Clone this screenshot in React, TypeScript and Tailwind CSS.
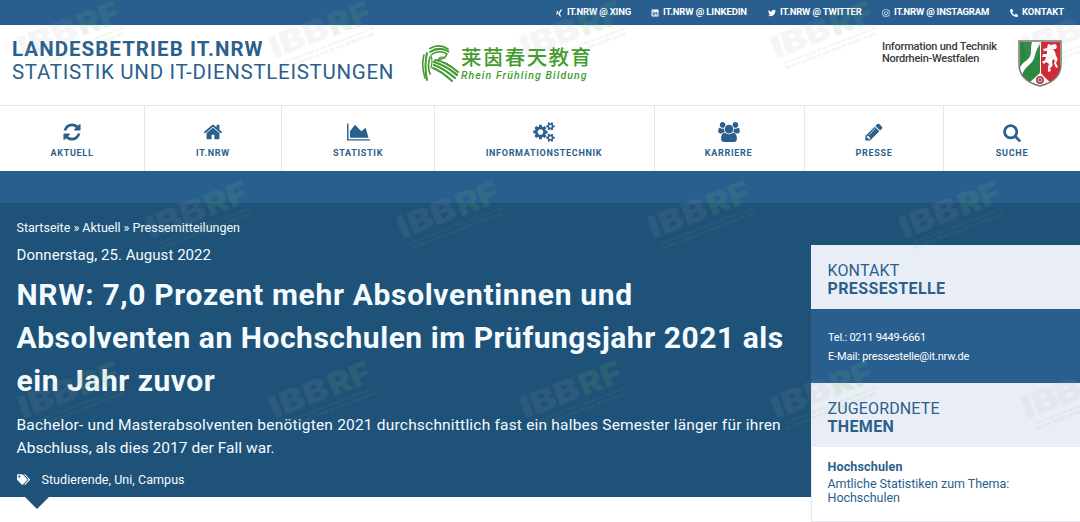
import React from 'react';
import { FaXing, FaLinkedin, FaTwitter, FaInstagram, FaPhoneAlt, FaTags } from 'react-icons/fa';

interface GlyphProps {
  d: string;
  w?: number;
  className?: string;
}

function Glyph({ d, w = 1792, className }: GlyphProps) {
  return (
    <svg viewBox={`0 0 ${w} 1792`} className={className} fill="currentColor">
      <path d={d} />
    </svg>
  );
}

const REFRESH = 'M1639 1056q0 5-1 7-64 268-268 434.500t-478 166.500q-146 0-282.500-55t-243.500-157l-129 129q-19 19-45 19t-45-19-19-45v-448q0-26 19-45t45-19h448q26 0 45 19t19 45-19 45l-137 137q71 66 161 102t187 36q134 0 250-65t186-179q11-17 53-117 8-23 30-23h192q13 0 22.500 9.500t9.500 22.500zm25-800v448q0 26-19 45t-45 19h-448q-26 0-45-19t-19-45 19-45l138-138q-148-137-349-137-134 0-250 65t-186 179q-11 17-53 117-8 23-30 23h-199q-13 0-22.500-9.500t-9.500-22.500v-7q65-268 270-434.500t480-166.500q146 0 284 55.500t245 156.500l130-129q19-19 45-19t45 19 19 45z';
const HOME = 'M1472 992v480q0 26-19 45t-45 19h-384v-384h-256v384h-384q-26 0-45-19t-19-45v-480q0-1 .5-3t.5-3l575-474 575 474q1 2 1 6zm223-69l-62 74q-8 9-21 11h-3q-13 0-21-7l-692-577-692 577q-12 8-24 7-13-2-21-11l-62-74q-8-10-7-23.500t11-21.500l719-599q32-26 76-26t76 26l244 204v-195q0-14 9-23t23-9h192q14 0 23 9t9 23v408l219 182q10 8 11 21.500t-7 23.500z';
const CHART = 'M2048 1536v128h-2048v-1536h128v1408h1920zM1664 512l256 896h-1664v-576l448-576 576 576z';
const COGS = 'M896 896q0-106-75-181t-181-75-181 75-75 181 75 181 181 75 181-75 75-181zm768 512q0-52-38-90t-90-38-90 38-38 90q0 53 37.500 90.500t90.500 37.500 90.500-37.500 37.500-90.500zm0-1024q0-52-38-90t-90-38-90 38-38 90q0 53 37.500 90.500t90.500 37.500 90.500-37.500 37.500-90.500zm-384 421v185q0 10-7 19.500t-16 10.500l-155 24q-11 35-32 76 34 48 90 115 7 11 7 20 0 12-7 19-23 30-82.500 89.500t-78.500 59.500q-11 0-21-7l-115-90q-37 19-77 31-11 108-23 155-7 24-30 24h-186q-11 0-20-7.500t-10-17.500l-23-153q-34-10-75-31l-118 89q-7 7-20 7-11 0-21-8-144-133-144-160 0-9 7-19 10-14 41-53t47-61q-23-44-35-82l-152-24q-10-1-17-9.500t-7-19.500v-185q0-10 7-19.500t16-10.500l155-24q11-35 32-76-34-48-90-115-7-11-7-20 0-12 7-20 22-30 82-89t79-59q11 0 21 7l115 90q34-18 77-32 11-108 23-154 7-24 30-24h186q11 0 20 7.500t10 17.500l23 153q34 10 75 31l118-89q8-7 20-7 11 0 21 8 144 133 144 160 0 8-7 19-12 16-42 54t-45 60q23 48 34 82l152 23q10 2 17 10.500t7 19.500zm640 533v140q0 16-149 31-12 27-30 52 51 113 51 138 0 4-4 7-122 71-124 71-8 0-46-47t-52-68q-20 2-30 2t-30-2q-14 21-52 68t-46 47q-2 0-124-71-4-3-4-7 0-25 51-138-18-25-30-52-149-15-149-31v-140q0-16 149-31 13-29 30-52-51-113-51-138 0-4 4-7 4-2 35-20t59-34 30-16q8 0 46 46.500t52 67.500q20-2 30-2t30 2q51-71 92-112l6-2q4 0 124 70 4 3 4 7 0 25-51 138 17 23 30 52 149 15 149 31zm0-1024v140q0 16-149 31-12 27-30 52 51 113 51 138 0 4-4 7-122 71-124 71-8 0-46-47t-52-68q-20 2-30 2t-30-2q-14 21-52 68t-46 47q-2 0-124-71-4-3-4-7 0-25 51-138-18-25-30-52-149-15-149-31v-140q0-16 149-31 13-29 30-52-51-113-51-138 0-4 4-7 4-2 35-20t59-34 30-16q8 0 46 46.500t52 67.500q20-2 30-2t30 2q51-71 92-112l6-2q4 0 124 70 4 3 4 7 0 25-51 138 17 23 30 52 149 15 149 31z';
const USERS = 'M593 896q-162 5-265 128h-134q-82 0-138-40.500t-56-118.500q0-353 124-353 6 0 43.500 21t97.500 42.500 119 21.500q67 0 133-23-5 37-5 66 0 139 81 256zM1664 1533q0 120-73 189.500t-194 69.500h-874q-121 0-194-69.500t-73-189.500q0-53 3.500-103.500t14-109 26.500-108.500 43-97.500 62-81 85.500-53.500 111.500-20q10 0 43 21.500t73 48 107 48 135 21.500 135-21.500 107-48 73-48 43-21.500q61 0 111.500 20t85.500 53.500 62 81 43 97.500 26.500 108.500 14 109 3.500 103.500zM640 256q0 106-75 181t-181 75-181-75-75-181 75-181 181-75 181 75 75 181zM1344 640q0 159-112.500 271.500t-271.500 112.500-271.500-112.500-112.500-271.500 112.500-271.500 271.500-112.500 271.500 112.500 112.500 271.500zM1920 865q0 78-56 118.500t-138 40.500h-134q-103-123-265-128 81-117 81-256 0-29-5-66 66 23 133 23 59 0 119-21.500t97.500-42.500 43.500-21q124 0 124 353zM1792 256q0 106-75 181t-181 75-181-75-75-181 75-181 181-75 181 75 75 181z';
const PENCIL = 'M491 1536l91-91-235-235-91 91v107h128v128h107zm523-928q0-22-22-22-10 0-17 7l-542 542q-7 7-7 17 0 22 22 22 10 0 17-7l542-542q7-7 7-17zm-54-192l416 416-832 832h-416v-416zm683 96q0 53-37 90l-166 166-416-416 166-165q36-38 90-38 53 0 91 38l235 234q37 39 37 91z';
const SEARCH = 'M1216 832q0-185-131.500-316.500t-316.500-131.500-316.500 131.500-131.500 316.500 131.500 316.500 316.500 131.500 316.500-131.500 131.500-316.500zm512 832q0 52-38 90t-90 38q-54 0-90-38l-343-342q-179 124-399 124-143 0-273.500-55.500t-225-150-150-225-55.500-273.500 55.500-273.500 150-225 225-150 273.500-55.500 273.500 55.500 225 150 150 225 55.500 273.500q0 220-124 399l343 343q37 37 37 90z';

const socialLinks = [
  { label: 'IT.NRW @ XING', icon: FaXing, cls: 'ml-[555px] w-[96px] tracking-[-0.19px]' },
  { label: 'IT.NRW @ LINKEDIN', icon: FaLinkedin, cls: 'w-[117px] tracking-[-0.13px]' },
  { label: 'IT.NRW @ TWITTER', icon: FaTwitter, cls: 'w-[114px] tracking-[-0.17px]' },
  { label: 'IT.NRW @ INSTAGRAM', icon: FaInstagram, cls: 'w-[128px] tracking-[-0.21px]' },
  { label: 'KONTAKT', icon: FaPhoneAlt, cls: 'w-[60px] tracking-[-0.1px]' },
];

const navItems = [
  { label: 'AKTUELL', d: REFRESH, cls: 'w-[145px]', icon: 'h-[20px] w-[20px]' },
  { label: 'IT.NRW', d: HOME, cls: 'w-[137px]', icon: 'h-[20px] w-[20px]' },
  { label: 'STATISTIK', d: CHART, w: 2048, cls: 'w-[153px]', icon: 'h-[20px] w-[23px]' },
  { label: 'INFORMATIONSTECHNIK', d: COGS, w: 1920, cls: 'w-[220px] pr-[1px]', icon: 'h-[20px] w-[22px]' },
  { label: 'KARRIERE', d: USERS, w: 1920, cls: 'w-[150px] pr-[2px]', icon: 'h-[20px] w-[22px]' },
  { label: 'PRESSE', d: PENCIL, cls: 'w-[139px]', icon: 'h-[20px] w-[20px]' },
  { label: 'SUCHE', d: SEARCH, cls: 'w-[136px]', icon: 'h-[19px] w-[20px]' },
];

function TopBar() {
  return (
    <div className="flex h-[25px] items-center bg-[#285f8f] text-[9.5px] font-bold text-white">
      {socialLinks.map(({ label, icon: Icon, cls }) => (
        <a key={label} className={`flex items-center gap-[4px] whitespace-nowrap ${cls}`}>
          <Icon className="h-[8px] w-[8px] shrink-0" />
          {label}
        </a>
      ))}
    </div>
  );
}

function PartnerLogo() {
  return (
    <div className="flex w-[172px] text-[#459a31]">
      <svg viewBox="0 0 38 38" className="h-[38px] w-[38px] shrink-0" fill="none" stroke="currentColor" strokeLinecap="round">
        <path d="M9 4.500Q18-1 27 5" strokeWidth="1.800" />
        <path d="M9 8Q18 2 27.500 7.500" strokeWidth="2" />
        <path d="M10 11Q18 5 26 10Q24 15 17 15.500" strokeWidth="1.500" />
        <path d="M18 14Q21 12 24 14" strokeWidth="1.200" />
        <path d="M3 11Q0 22 4 34" strokeWidth="1.600" />
        <path d="M6 9Q3 22 6 36" strokeWidth="2" />
        <path d="M9 13Q6 22 9 30" strokeWidth="1.700" />
        <path d="M10 12Q12 16 10 24" strokeWidth="1.200" />
        <path d="M14 16Q24 17 37 28" strokeWidth="2" />
        <path d="M13 18Q24 21 36 31" strokeWidth="2.300" />
        <path d="M13 21Q22 24 34 34" strokeWidth="2.200" />
        <path d="M12 24Q20 27 31 37" strokeWidth="2" />
      </svg>
      <div className="ml-[2px] flex flex-col whitespace-nowrap">
        <span className="font-['Noto_Sans_CJK_SC',sans-serif] text-[20.5px] leading-[25px] font-medium tracking-[1.4px]">
          莱茵春天教育
        </span>
        <span className="text-[10.5px] leading-[13px] font-medium italic tracking-[1.1px]">
          Rhein Frühling Bildung
        </span>
      </div>
    </div>
  );
}

function CoatOfArms() {
  return (
    <svg viewBox="0 0 44 47" className="h-[47px] w-[44px]">
      <defs>
        <clipPath id="shield">
          <path d="M1 1H43V24C43 36 34 43 22 46C10 43 1 36 1 24Z" />
        </clipPath>
      </defs>
      <g clipPath="url(#shield)">
        <rect width="44" height="47" fill="#fff" />
        <path d="M2 2H22V33L13 43L2 34Z" fill="#2c8740" />
        <path d="M14 1H22V4Q18 10 17 15Q16 21 11 25Q6 29 4 35L1 29Q4 23 9 20Q13 17 13 11Q13 5 14 1Z" fill="#fff" />
        <path d="M23 2H42V34L31 43L23 33Z" fill="#d02a34" />
        <path d="M30 4L33 5L37 4Q40 6 38 9L35 9Q38 12 38 16Q41 19 38 23L40 27L38 28L36 23Q38 20 35 19L34 22Q36 26 32 28L33 31L30 32L30 27L31 24L28 22L26 24L24 22L27 20L28 17L24 17L25 14L29 14L29 11L26 11L25 9L29 8Z" fill="#fff" />
        <path d="M11 43L22 33L33 43L22 47Z" fill="#fff" />
      </g>
      <circle cx="22" cy="40" r="3.200" fill="#d9a09f" stroke="#b0444a" strokeWidth="1.600" />
      <circle cx="22" cy="40" r="1" fill="#8d2a2f" />
      <path d="M1 1H43V24C43 36 34 43 22 46C10 43 1 36 1 24Z" fill="none" stroke="#7b7472" strokeWidth="1.500" />
    </svg>
  );
}

function Header() {
  return (
    <header className="flex h-[80px] bg-white">
      <div className="w-[421px] pt-[13px] pl-[12px] text-[20.5px] leading-[23px] whitespace-nowrap text-[#2b5f8c]">
        <div className="font-bold tracking-[1.04px]">LANDESBETRIEB IT.NRW</div>
        <div className="tracking-[0.69px]">STATISTIK UND IT-DIENSTLEISTUNGEN</div>
      </div>
      <div className="pt-[19px]">
        <PartnerLogo />
      </div>
      <div className="ml-[289px] w-[136px] pt-[16px] text-[11px] leading-[11.5px] font-medium whitespace-nowrap text-[#3c3c3c]">
        <div className="tracking-[-0.22px]">Information und Technik</div>
        <div className="tracking-[-0.26px]">Nordrhein-Westfalen</div>
      </div>
      <div className="pt-[15px]">
        <CoatOfArms />
      </div>
    </header>
  );
}

function Nav() {
  return (
    <nav className="flex h-[66px] border-t border-[#e6e8ea] bg-white text-[#2b5f8c]">
      {navItems.map((item) => (
        <a key={item.label} className={`flex flex-col items-center border-r border-[#e6e8ea] pt-[15px] last:border-r-0 ${item.cls}`}>
          <span className="flex h-[22px] items-center">
            <Glyph d={item.d} w={item.w} className={item.icon} />
          </span>
          <span className="mt-[4px] text-[9px] leading-[12px] font-bold tracking-[0.7px]">{item.label}</span>
        </a>
      ))}
    </nav>
  );
}

function Hero() {
  return (
    <main className="w-[811px]">
      <div className="h-[294px] bg-[#1f5278] pl-[16.500px] text-[#f4fbff] whitespace-nowrap">
        <div className="pt-[16px] text-[12.5px] leading-[18px]">
          Startseite » Aktuell » Pressemitteilungen
        </div>
        <div className="mt-[8px] text-[15px] leading-[20px] tracking-[0.05px]">Donnerstag, 25. August 2022</div>
        <h1 className="mt-[7.500px] text-[30px] leading-[43px] font-bold">
          <span className="tracking-[0.67px]">NRW: 7,0 Prozent mehr Absolventinnen und</span>
          <br />
          <span className="tracking-[0.53px]">Absolventen an Hochschulen im Prüfungsjahr 2021 als</span>
          <br />
          <span className="tracking-[0.53px]">ein Jahr zuvor</span>
        </h1>
        <p className="mt-[12px] text-[15.5px] leading-[23px] tracking-[0.2px]">
          Bachelor- und Masterabsolventen benötigten 2021 durchschnittlich fast ein halbes Semester länger für ihren
          <br />
          <span className="tracking-[0.04px]">Abschluss, als dies 2017 der Fall war.</span>
        </p>
        <div className="mt-[11px] flex items-center text-[12.5px] leading-[18px] tracking-[0.05px]">
          <FaTags className="mr-[12px] h-[13px] w-[13px]" />
          Studierende, Uni, Campus
        </div>
      </div>
      <svg viewBox="0 0 24 12" className="ml-[25px] h-[12px] w-[24px]">
        <path d="M0 0H24L12 12Z" fill="#1f5278" />
      </svg>
    </main>
  );
}

function PanelTitle({ top, bottom }: { top: string; bottom: string }) {
  return (
    <div className="h-[64px] bg-[#e9eef6] pt-[17px] pl-[16.500px] text-[16px] leading-[17.500px] text-[#2b5f8c]">
      <div className="tracking-[0.14px]">{top}</div>
      <div className="font-bold tracking-[0.38px]">{bottom}</div>
    </div>
  );
}

function Sidebar() {
  return (
    <aside className="w-[269px]">
      <div className="h-[42px] bg-[#1f5278]" />
      <PanelTitle top="KONTAKT" bottom="PRESSESTELLE" />
      <div className="h-[74px] bg-[#285f8f] pt-[20px] pl-[17px] text-[11px] leading-[18.500px] text-white">
        <div className="tracking-[-0.24px]">Tel.: 0211 9449-6661</div>
        <div className="tracking-[-0.17px]">E-Mail: pressestelle@it.nrw.de</div>
      </div>
      <PanelTitle top="ZUGEORDNETE" bottom="THEMEN" />
      <div className="h-[75px] border-b border-l border-[#e4eaf1] bg-white pt-[12px] pl-[15.500px] text-[12.5px] text-[#2b5f8c]">
        <div className="leading-[16px] font-bold tracking-[0.15px]">Hochschulen</div>
        <div className="mt-[2px] leading-[13.500px] tracking-[-0.04px]">
          Amtliche Statistiken zum Thema:
          <br />
          Hochschulen
        </div>
      </div>
    </aside>
  );
}

const stamps = [
  [16, 60], [267, 60], [518, 60], [769, 60], [1020, 60],
  [-107, 240], [144, 240], [395, 240], [646, 240], [897, 240],
  [16, 420], [267, 420], [518, 420], [769, 420], [1020, 420],
];

function Watermark() {
  return (
    <svg viewBox="0 0 1080 522" className="pointer-events-none absolute top-0 left-0 h-[522px] w-[1080px]">
      {stamps.map(([x, y]) => (
        <g key={`${x}-${y}`} transform={`translate(${x + 7} ${y - 1}) rotate(-21)`} fontFamily="Inter, sans-serif" fontWeight="900" fontSize="31">
          <text x="0" y="0" fill="#a4a8b4" opacity="0.1" textLength="61" lengthAdjust="spacingAndGlyphs">IBB</text>
          <text x="63" y="0" fill="#6fb06a" opacity="0.14" textLength="43" lengthAdjust="spacingAndGlyphs">RF</text>
          <path d="M6 7H105" stroke="#6fae4f" strokeWidth="2" strokeDasharray="7 1.500 4 1" opacity="0.09" />
          <path d="M6 12H103" stroke="#6fae4f" strokeWidth="3" strokeDasharray="5 1 9 1.500" opacity="0.08" />
        </g>
      ))}
    </svg>
  );
}

export default function App() {
  return (
    <div className="relative h-[522px] w-[1080px] overflow-hidden bg-white font-['Roboto',sans-serif]">
      <TopBar />
      <Header />
      <Nav />
      <div className="h-[32px] bg-[#285f8f]" />
      <div className="flex">
        <Hero />
        <Sidebar />
      </div>
      <Watermark />
    </div>
  );
}
